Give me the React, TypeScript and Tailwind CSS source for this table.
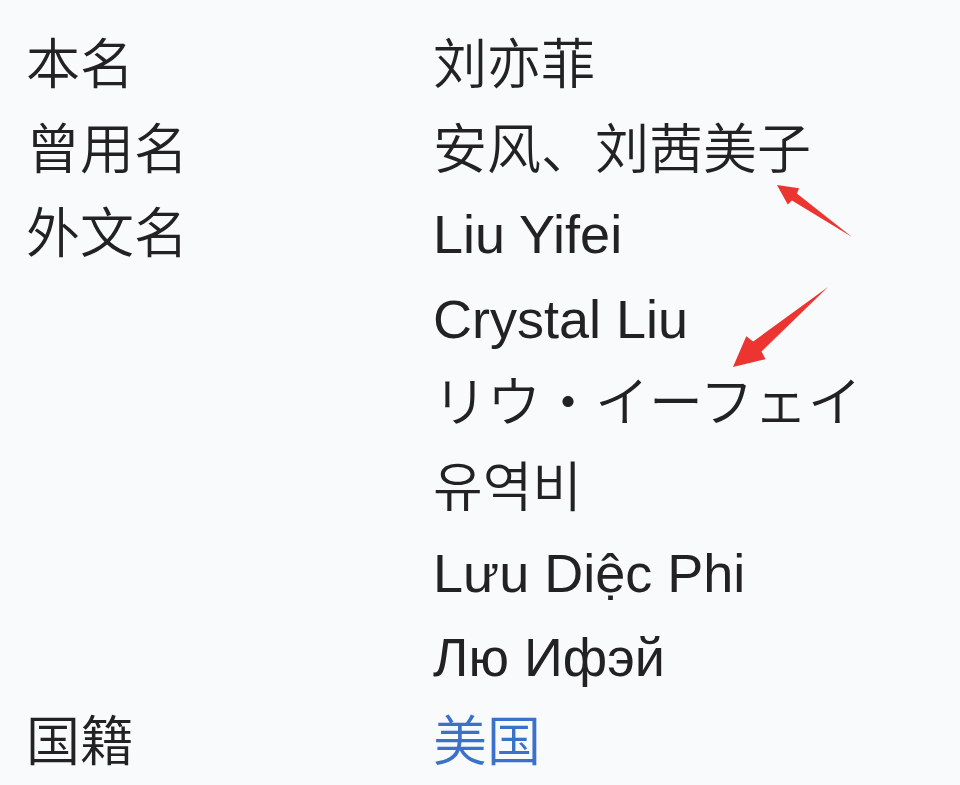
const rows: { label?: string; value: string; link?: boolean }[] = [
  { label: '本名', value: '刘亦菲' },
  { label: '曾用名', value: '安风、刘茜美子' },
  { label: '外文名', value: 'Liu Yifei' },
  { value: 'Crystal Liu' },
  { value: 'リウ・イーフェイ' },
  { value: '유역비' },
  { value: 'Lưu Diệc Phi' },
  { value: 'Лю Ифэй' },
  { label: '国籍', value: '美国', link: true },
];

// tapered arrow from tail to tip
function arrowPoints(tx: number, ty: number, px: number, py: number, hl: number, hw: number, sw: number) {
  const len = Math.hypot(px - tx, py - ty);
  const dx = (px - tx) / len;
  const dy = (py - ty) / len;
  const nx = -dy;
  const ny = dx;
  const jx = px - dx * hl * 1.06;
  const jy = py - dy * hl * 1.06;
  const bx = px - dx * hl;
  const by = py - dy * hl;
  const pts = [
    [tx, ty],
    [jx + nx * sw, jy + ny * sw],
    [bx + nx * hw, by + ny * hw],
    [px, py],
    [bx - nx * hw, by - ny * hw],
    [jx - nx * sw, jy - ny * sw],
  ];
  return pts.map((p) => p.join(',')).join(' ');
}

export default function App() {
  return (
    <div className="relative w-[960px] h-[785px] overflow-hidden bg-[#f9fafc] pt-[23px] pl-[26px] font-['Liberation_Sans','Noto_Sans_CJK_SC',sans-serif] font-[350] text-[54px] leading-[84.6px] text-[#222224]">
      <div className="grid grid-cols-[407px_1fr]">
        {rows.map((r, i) => (
          <div key={i} className="contents">
            <div>{r.label ?? ''}</div>
            <div className={r.link ? 'text-[#3a72c9]' : ''}>{r.value}</div>
          </div>
        ))}
      </div>

      <svg className="absolute inset-0 pointer-events-none" width="960" height="785">
        <polygon points={arrowPoints(852, 237, 777, 185, 20, 10, 4.3)} fill="#ec3530" />
        <polygon points={arrowPoints(828, 287, 733, 367, 30, 15, 6.5)} fill="#ec3530" />
      </svg>
    </div>
  );
}
